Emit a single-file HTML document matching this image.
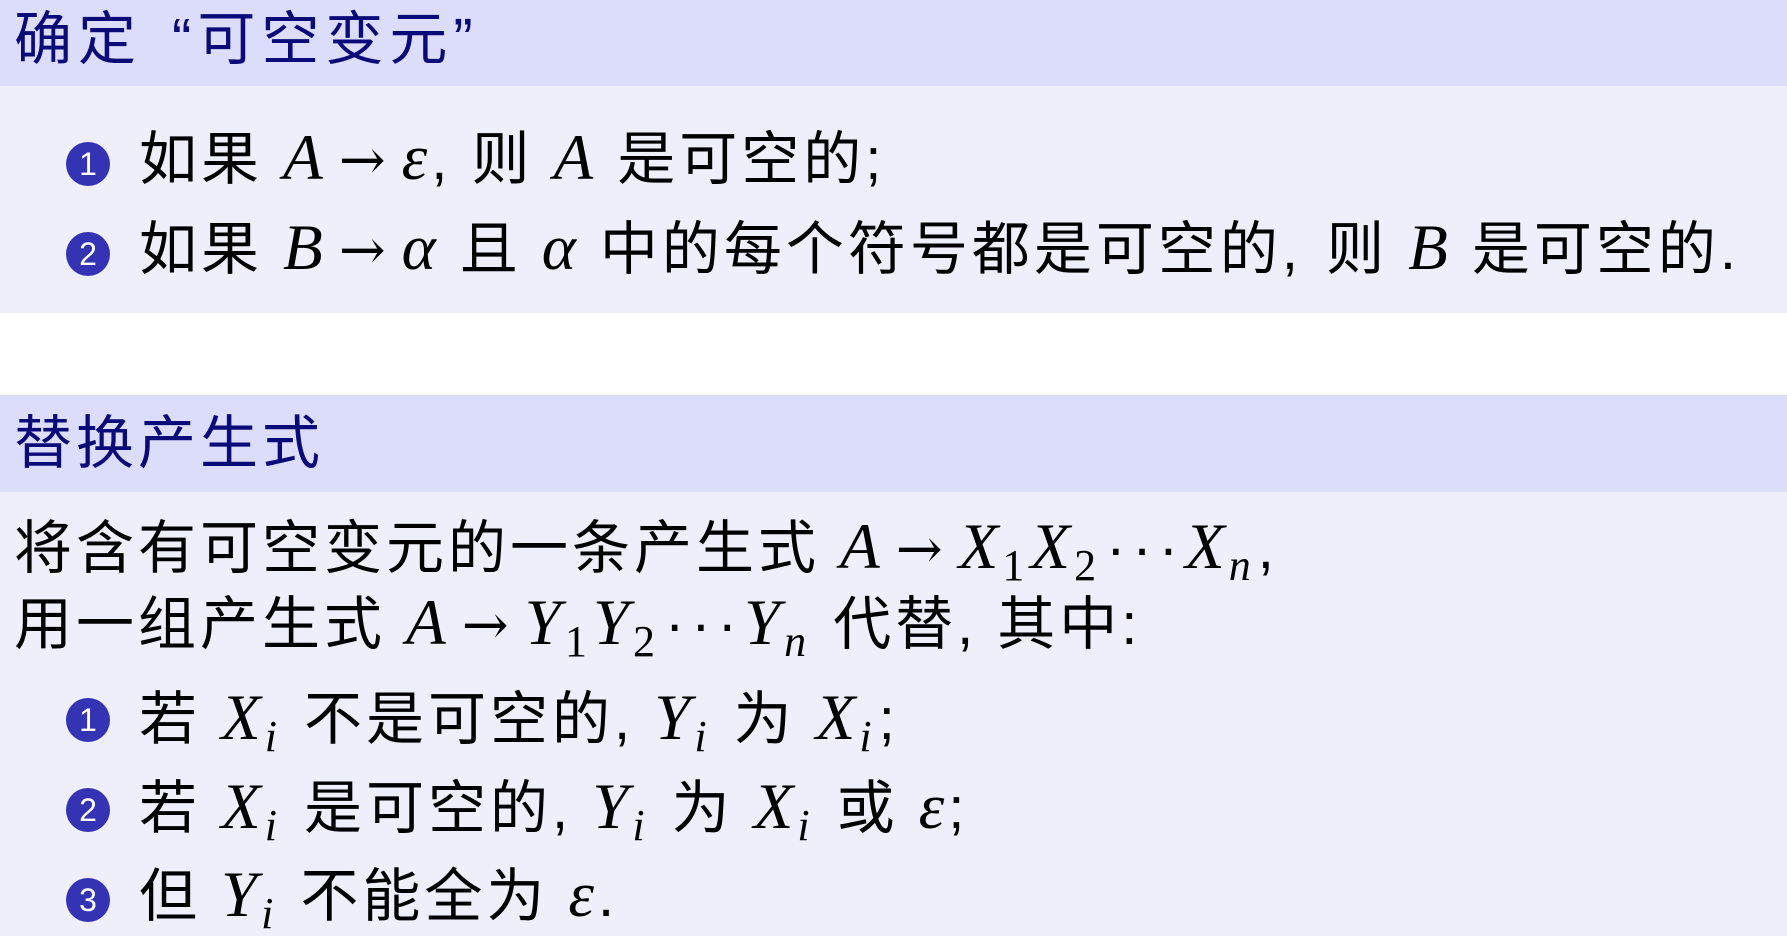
<!DOCTYPE html>
<html><head><meta charset="utf-8"><style>
body{margin:0;width:1787px;height:936px;position:relative;background:#fff;overflow:hidden;font-family:"Liberation Sans","Noto Sans CJK SC",sans-serif;}
.bar{position:absolute;left:0;width:1787px;}
.h{background:#dcdcfb}
.b{background:#efeffb}
.l{position:absolute;font-size:58px;letter-spacing:4px;line-height:60px;height:60px;white-space:nowrap;color:#000;}
.t{color:#0a0a78}
i{font-family:"Liberation Serif",serif;font-style:italic;font-size:65px;letter-spacing:4px;}
sub{font-family:"Liberation Serif",serif;font-size:44px;vertical-align:-12px;line-height:0;letter-spacing:3px;font-style:normal;margin-right:3px}
.ar{font-family:"DejaVu Serif",serif;font-size:56px;margin:0 16px 0 12px;letter-spacing:0;}
.s{display:inline-block;width:20px}
.d{letter-spacing:7px;margin-left:4px}
.bul{position:absolute;width:44px;height:44px;border-radius:50%;background:#3333b3;color:#fff;font-family:"Liberation Sans",sans-serif;font-size:32px;line-height:44px;text-align:center;}
</style></head><body>
<div class="bar h" style="top:0;height:86px"></div>
<div class="bar b" style="top:86px;height:227px"></div>
<div class="bar h" style="top:395px;height:97px"></div>
<div class="bar b" style="top:492px;height:444px"></div>

<div class="l t" style="left:14px;top:10px;letter-spacing:6px">确定<span class="s" style="width:30px"></span>“可空变元”</div>
<div class="bul" style="left:66px;top:142px">1</div>
<div class="l" style="left:139px;top:128px">如果<span class="s"></span><i>A</i><span class="ar">→</span><i>ε</i>, 则<span class="s"></span><i>A</i><span class="s"></span>是可空的;</div>
<div class="bul" style="left:66px;top:232px">2</div>
<div class="l" style="left:139px;top:218px">如果<span class="s"></span><i>B</i><span class="ar">→</span><i>α</i><span class="s"></span>且<span class="s"></span><i>α</i><span class="s"></span>中的每个符号都是可空的, <span class="s" style="width:4px"></span>则<span class="s"></span><i>B</i><span class="s"></span>是可空的.</div>

<div class="l t" style="left:14px;top:414px">替换产生式</div>
<div class="l" style="left:14px;top:517px">将含有可空变元的一条产生式<span class="s"></span><i>A</i><span class="ar">→</span><i>X</i><sub>1</sub><i>X</i><sub>2</sub><span class="d">···</span><i>X</i><sub><i style="font-size:44px">n</i></sub>,</div>
<div class="l" style="left:14px;top:593px">用一组产生式<span class="s"></span><i>A</i><span class="ar">→</span><i>Y</i><sub>1</sub><i>Y</i><sub>2</sub><span class="d">···</span><i>Y</i><sub><i style="font-size:44px">n</i></sub><span class="s"></span>代替, 其中:</div>
<div class="bul" style="left:66px;top:698px">1</div>
<div class="l" style="left:139px;top:688px">若<span class="s"></span><i>X<sub><i style="font-size:44px">i</i></sub></i><span class="s"></span>不是可空的, <i>Y<sub><i style="font-size:44px">i</i></sub></i><span class="s"></span>为<span class="s"></span><i>X<sub><i style="font-size:44px">i</i></sub></i>;</div>
<div class="bul" style="left:66px;top:788px">2</div>
<div class="l" style="left:139px;top:777px">若<span class="s"></span><i>X<sub><i style="font-size:44px">i</i></sub></i><span class="s"></span>是可空的, <i>Y<sub><i style="font-size:44px">i</i></sub></i><span class="s"></span>为<span class="s"></span><i>X<sub><i style="font-size:44px">i</i></sub></i><span class="s"></span>或<span class="s"></span><i>ε</i>;</div>
<div class="bul" style="left:66px;top:878px">3</div>
<div class="l" style="left:139px;top:865px">但<span class="s"></span><i>Y<sub><i style="font-size:44px">i</i></sub></i><span class="s"></span>不能全为<span class="s"></span><i>ε</i>.</div>
</body></html>
